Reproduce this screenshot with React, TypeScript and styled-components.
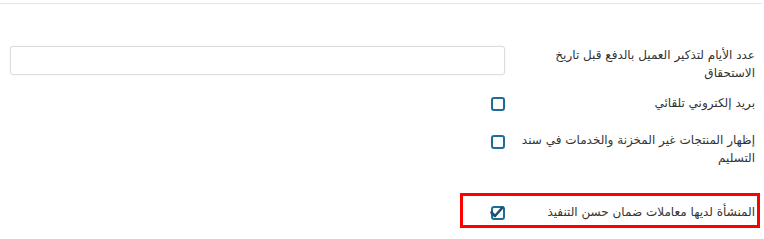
import React from "react";
import styled, { createGlobalStyle } from "styled-components";

const GlobalStyle = createGlobalStyle`
  body {
    margin: 0;
    background: #fff;
    font-family: "DejaVu Sans", "Noto Sans", sans-serif;
    color: #333;
  }
`;

const Page = styled.div`
  direction: rtl;
  width: 764px;
  height: 239px;
  overflow: hidden;
  box-sizing: border-box;
  padding: 3px 9px 0 11px;
`;

const Divider = styled.div`
  height: 1px;
  background: #e6e6e6;
  margin: 0 -7px 0 -11px;
`;

const Form = styled.div`
  display: flex;
  flex-direction: column;
`;

const Row = styled.div<{ $top: number }>`
  display: grid;
  grid-template-columns: 235px 1fr;
  column-gap: 15px;
  align-items: start;
  margin-top: ${(p) => p.$top}px;
`;

const HighlightRow = styled(Row)`
  width: 300px;
  box-sizing: border-box;
  border: 3px solid #f00;
  padding: 7px 2px 4px 0;
  margin-right: -5px;
`;

const Label = styled.label`
  font-size: 12px;
  line-height: 18px;
  color: #333;
`;

const TextInput = styled.input`
  box-sizing: border-box;
  width: 495px;
  height: 29px;
  border: 1px solid #dcdcdc;
  border-radius: 3px;
  box-shadow: 0 0 2px rgba(0, 0, 0, 0.08);
  outline: none;
`;

const Box = styled.span<{ $top: number }>`
  display: inline-flex;
  position: relative;
  box-sizing: border-box;
  width: 14px;
  height: 14px;
  border: 2px solid #1d6c9c;
  border-radius: 3px;
  margin-top: ${(p) => p.$top}px;
  background: #fff;
`;

const Check = styled.svg`
  position: absolute;
  left: -3px;
  top: -2px;
  width: 14px;
  height: 12px;
`;

const Checkbox: React.FC<{ checked?: boolean; top: number }> = ({ checked, top }) => (
  <Box $top={top}>
    {checked && (
      <Check viewBox="0 0 14 12">
        <path d="M1.5 6.5 L5 10 L12.5 1.5" fill="none" stroke="#1b4f78" strokeWidth="2.6" strokeLinecap="round" strokeLinejoin="round" />
      </Check>
    )}
  </Box>
);

export default function App() {
  return (
    <>
      <GlobalStyle />
      <Page>
        <Divider />
        <Form>
          <Row $top={42}>
            <Label>عدد الأيام لتذكير العميل بالدفع قبل تاريخ الاستحقاق</Label>
            <TextInput type="text" />
          </Row>
          <Row $top={12}>
            <Label>بريد إلكتروني تلقائي</Label>
            <Checkbox top={3} />
          </Row>
          <Row $top={19}>
            <Label>إظهار المنتجات غير المخزنة والخدمات في سند التسليم</Label>
            <Checkbox top={4} />
          </Row>
          <HighlightRow $top={26}>
            <Label>المنشأة لديها معاملات ضمان حسن التنفيذ</Label>
            <Checkbox checked top={3} />
          </HighlightRow>
        </Form>
      </Page>
    </>
  );
}
